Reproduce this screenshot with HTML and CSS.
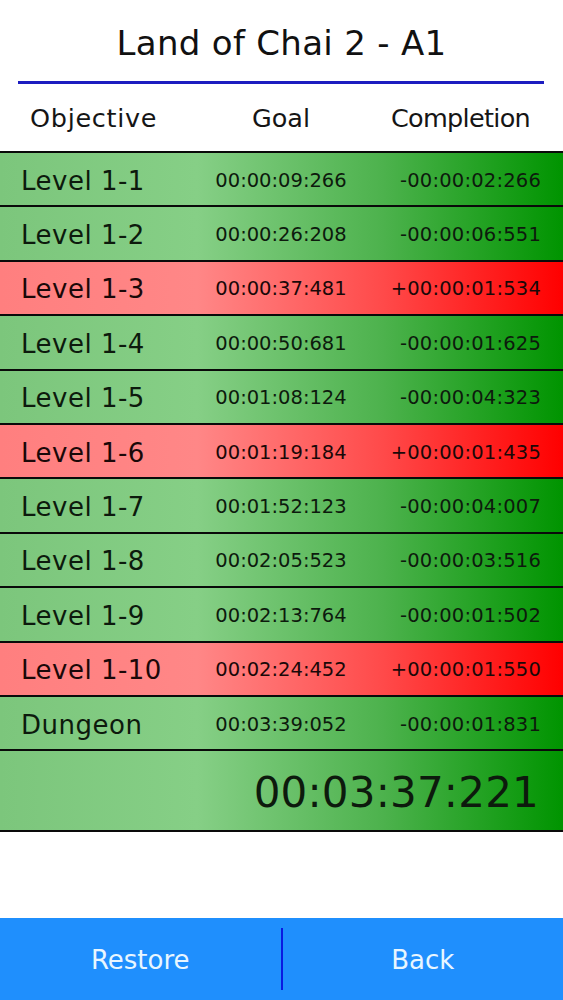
FILE: index.html
```html
<!DOCTYPE html>
<html>
<head>
<meta charset="utf-8">
<title>Land of Chai 2 - A1</title>
<link rel="stylesheet" href="styles.css">
</head>
<body>
<div class="page">
  <div class="title">Land of Chai 2 - A1</div>
  <div class="rule"></div>
  <div class="header">
    <span class="h-obj">Objective</span>
    <span class="h-goal">Goal</span>
    <span class="h-comp">Completion</span>
  </div>
  <div class="rows">
    <div class="row good"><span class="obj">Level 1-1</span><span class="goal">00:00:09:266</span><span class="comp">-00:00:02:266</span></div>
    <div class="row good"><span class="obj">Level 1-2</span><span class="goal">00:00:26:208</span><span class="comp">-00:00:06:551</span></div>
    <div class="row bad"><span class="obj">Level 1-3</span><span class="goal">00:00:37:481</span><span class="comp">+00:00:01:534</span></div>
    <div class="row good"><span class="obj">Level 1-4</span><span class="goal">00:00:50:681</span><span class="comp">-00:00:01:625</span></div>
    <div class="row good"><span class="obj">Level 1-5</span><span class="goal">00:01:08:124</span><span class="comp">-00:00:04:323</span></div>
    <div class="row bad"><span class="obj">Level 1-6</span><span class="goal">00:01:19:184</span><span class="comp">+00:00:01:435</span></div>
    <div class="row good"><span class="obj">Level 1-7</span><span class="goal">00:01:52:123</span><span class="comp">-00:00:04:007</span></div>
    <div class="row good"><span class="obj">Level 1-8</span><span class="goal">00:02:05:523</span><span class="comp">-00:00:03:516</span></div>
    <div class="row good"><span class="obj">Level 1-9</span><span class="goal">00:02:13:764</span><span class="comp">-00:00:01:502</span></div>
    <div class="row bad"><span class="obj">Level 1-10</span><span class="goal">00:02:24:452</span><span class="comp">+00:00:01:550</span></div>
    <div class="row good"><span class="obj">Dungeon</span><span class="goal">00:03:39:052</span><span class="comp">-00:00:01:831</span></div>
    <div class="row total good"><span class="total-time">00:03:37:221</span></div>
  </div>
  <div class="bar">
    <div class="btn">Restore</div>
    <div class="divider"></div>
    <div class="btn">Back</div>
  </div>
</div>
</body>
</html>
```

FILE: styles.css
```css
html, body {
  margin: 0;
  padding: 0;
  background: #ffffff;
}
body {
  font-family: "DejaVu Sans", Verdana, sans-serif;
  color: #111111;
}
.page {
  display: flex;
  flex-direction: column;
  height: 1000px;
}
.title {
  height: 76px;
  padding-top: 5px;
  display: flex;
  align-items: center;
  justify-content: center;
  font-size: 34px;
  letter-spacing: 0.3px;
  color: #111;
}
.rule {
  height: 3px;
  margin: 0 19px 0 18px;
  background: #1c1cc0;
}
.header {
  height: 67px;
  display: flex;
  align-items: center;
  font-size: 25.5px;
  color: #151515;
}
.h-obj {
  width: 160px;
  padding-left: 30px;
  letter-spacing: 0.7px;
}
.h-goal {
  width: 182px;
  text-align: center;
}
.h-comp {
  flex: 1;
  text-align: right;
  padding-right: 33px;
  letter-spacing: -0.7px;
}
.rows {
  border-top: 2px solid #0a0a0a;
}
.row {
  height: 52.4px;
  border-bottom: 2px solid #0a0a0a;
  display: flex;
  align-items: center;
  color: #0d1a0d;
}
.row.good {
  background: linear-gradient(to right, #7cc67c 0%, #86cf86 35%, #4db24d 68%, #009400 100%);
}
.row.bad {
  color: #1a0808;
  background: linear-gradient(to right, #ff7f7f 0%, #ff8787 35%, #ff4a4a 68%, #ff0000 100%);
}
.obj {
  width: 169px;
  padding-left: 21px;
  font-size: 26px;
  letter-spacing: 0.5px;
  padding-top: 3px;
}
.goal {
  width: 182px;
  text-align: center;
  font-size: 19.5px;
  padding-top: 2px;
}
.comp {
  flex: 1;
  text-align: right;
  padding-right: 22px;
  font-size: 19.5px;
  letter-spacing: 0.2px;
  padding-top: 2px;
}
.row.total {
  height: 79px;
  justify-content: flex-end;
}
.total-time {
  font-size: 42px;
  letter-spacing: 0.2px;
  padding-right: 24px;
  padding-top: 3px;
}
.bar {
  margin-top: auto;
  height: 82px;
  background: #1f8ffd;
  display: flex;
  align-items: center;
}
.btn {
  flex: 1;
  text-align: center;
  color: #e8f6ff;
  font-size: 26px;
  padding-top: 2px;
}
.divider {
  width: 2px;
  height: 62px;
  background: #0a1ae0;
}
```
